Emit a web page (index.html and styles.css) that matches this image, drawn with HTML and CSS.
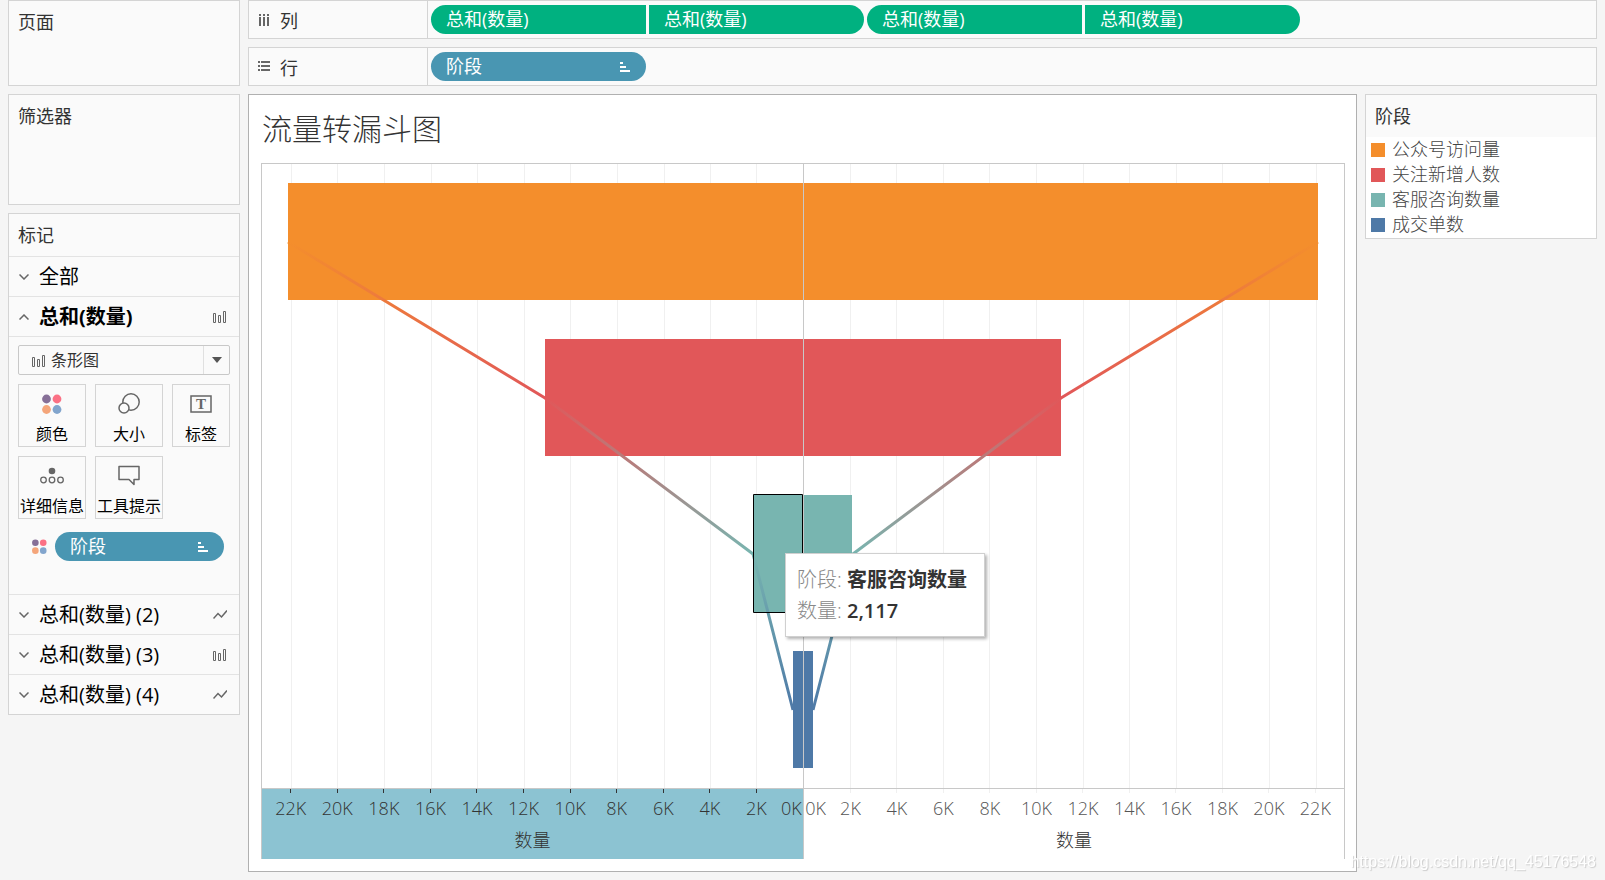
FILE: index.html
```
<!DOCTYPE html>
<html lang="zh-CN">
<head>
    <meta charset="UTF-8">
    <meta name="viewport" content="width=device-width, initial-scale=1.0">
    <title>流量转漏斗图</title>
    <link rel="stylesheet" href="styles.css">
</head>
<body>

    <!-- shared icons -->
    <svg class="sprite" aria-hidden="true">
        <symbol id="icon-down" viewBox="0 0 10 6"><path d="M.5 .5 5 5 9.5 .5" fill="none" stroke="#666" stroke-width="1.5"/></symbol>
        <symbol id="icon-up" viewBox="0 0 10 6"><path d="M.5 5.5 5 1 9.5 5.5" fill="none" stroke="#666" stroke-width="1.5"/></symbol>
        <symbol id="icon-bars" viewBox="0 0 14 12"><path d="M.5 2.5h2v9h-2zM5.5 4.5h2v7h-2zM10.5 .5h2v11h-2z" fill="none" stroke="#666"/></symbol>
        <symbol id="icon-line" viewBox="0 0 14 12"><path d="M.5 9.5 5 4.5 8.5 8 14 1.5" fill="none" stroke="#666" stroke-width="1.5"/></symbol>
        <symbol id="icon-sort" viewBox="0 0 10 10"><path d="M0 0h3v2H0zM0 4h6v2H0zM0 8h10v2H0z" fill="#fff"/></symbol>
        <symbol id="icon-color" viewBox="0 0 20 20">
            <circle cx="4.5" cy="5" r="4.4" fill="#866f97"/>
            <circle cx="15" cy="5" r="4.4" fill="#fb7185"/>
            <circle cx="4.5" cy="15.5" r="4.4" fill="#f4a57a"/>
            <circle cx="15" cy="15.5" r="4.4" fill="#82a5cd"/>
        </symbol>
    </svg>

    <div class="workspace">
        <aside class="sidebar">
            <section class="card pages"><h2>页面</h2></section>
            <section class="card filters"><h2>筛选器</h2></section>

            <section class="card marks">
                <h2>标记</h2>
                <button class="mark-row"><svg class="chevron"><use href="#icon-down"/></svg>全部</button>
                <button class="mark-row open"><svg class="chevron"><use href="#icon-up"/></svg>总和(数量)<svg class="mark-type"><use href="#icon-bars"/></svg></button>

                <div class="mark-detail">
                    <div class="type-select">
                        <svg class="type-icon"><use href="#icon-bars"/></svg>
                        <select aria-label="标记类型">
                            <option>条形图</option>
                        </select>
                        <span class="type-arrow"></span>
                    </div>

                    <div class="mark-buttons">
                        <button>
                            <svg viewBox="0 0 22 22"><use href="#icon-color" x="1" y="1" width="20" height="20"/></svg>
                            颜色
                        </button>
                        <button>
                            <svg viewBox="0 0 22 22" fill="#fafafa" stroke="#666" stroke-width="1.5">
                                <circle cx="13" cy="9" r="8.2"/>
                                <circle cx="6" cy="15" r="5"/>
                            </svg>
                            大小
                        </button>
                        <button>
                            <svg viewBox="0 0 22 22">
                                <rect x="1" y="3" width="20" height="16" fill="none" stroke="#666" stroke-width="1.5"/>
                                <text x="11" y="16" class="t-glyph">T</text>
                            </svg>
                            标签
                        </button>
                        <button>
                            <svg class="wide" viewBox="0 0 24 22" fill="none" stroke="#666" stroke-width="1.3">
                                <circle cx="12" cy="6" r="3.3" fill="#666" stroke="none"/>
                                <circle cx="3.5" cy="15" r="2.8"/>
                                <circle cx="12" cy="15" r="2.8"/>
                                <circle cx="20.5" cy="15" r="2.8"/>
                            </svg>
                            详细信息
                        </button>
                        <button>
                            <svg viewBox="0 0 22 22" fill="none" stroke="#666" stroke-width="1.5" stroke-linejoin="round">
                                <path d="M1 1.5h20v13h-5v5l-5-5H1z"/>
                            </svg>
                            工具提示
                        </button>
                    </div>

                    <div class="mark-pill">
                        <svg><use href="#icon-color"/></svg>
                        <button class="pill dimension">阶段<svg><use href="#icon-sort"/></svg></button>
                    </div>
                </div>

                <button class="mark-row"><svg class="chevron"><use href="#icon-down"/></svg>总和(数量) (2)<svg class="mark-type"><use href="#icon-line"/></svg></button>
                <button class="mark-row"><svg class="chevron"><use href="#icon-down"/></svg>总和(数量) (3)<svg class="mark-type"><use href="#icon-bars"/></svg></button>
                <button class="mark-row"><svg class="chevron"><use href="#icon-down"/></svg>总和(数量) (4)<svg class="mark-type"><use href="#icon-line"/></svg></button>
            </section>
        </aside>

        <main class="main">
            <div class="card shelf">
                <div class="shelf-label">
                    <svg viewBox="0 0 12 12" fill="#666"><path d="M1 0h2v2H1zM5 0h2v2H5zM9 0h2v2H9zM1 3h2v9H1zM5 3h2v9H5zM9 3h2v9H9z"/></svg>
                    列
                </div>
                <div class="pills">
                    <button class="pill measure first">总和(数量)</button>
                    <button class="pill measure last">总和(数量)</button>
                    <button class="pill measure first">总和(数量)</button>
                    <button class="pill measure last">总和(数量)</button>
                </div>
            </div>
            <div class="card shelf">
                <div class="shelf-label">
                    <svg viewBox="0 0 12 12" fill="#666"><path d="M0 0h2v2H0zM3 0h9v2H3zM0 4h2v2H0zM3 4h9v2H3zM0 8h2v2H0zM3 8h9v2H3z"/></svg>
                    行
                </div>
                <div class="pills">
                    <button class="pill dimension">阶段<svg><use href="#icon-sort"/></svg></button>
                </div>
            </div>

            <div class="content">
                <section class="view">
                    <h1>流量转漏斗图</h1>
                    <div class="chart">
                        <div class="plot">
                            <svg viewBox="0 0 1082 624" preserveAspectRatio="none" role="img" aria-label="流量转漏斗图">
                                <defs>
                                    <linearGradient id="stage" gradientUnits="userSpaceOnUse" x1="0" y1="78" x2="0" y2="546">
                                        <stop offset="0" stop-color="#f48e2c"/>
                                        <stop offset="33.3%" stop-color="#e15759"/>
                                        <stop offset="66.7%" stop-color="#78b5b0"/>
                                        <stop offset="100%" stop-color="#4e79a7"/>
                                    </linearGradient>
                                </defs>
                                <path class="grid" d="M29.5 0v624M75.5 0v624M122.5 0v624M169.5 0v624M215.5 0v624M262.5 0v624M308.5 0v624M355.5 0v624M402.5 0v624M448.5 0v624M494.5 0v624M588.5 0v624M634.5 0v624M681.5 0v624M727.5 0v624M774.5 0v624M821.5 0v624M867.5 0v624M914.5 0v624M960.5 0v624M1007.5 0v624M1054.5 0v624"/>
                                <g shape-rendering="crispEdges">
                                    <rect x="26" y="19" width="1030" height="117" fill="#f48e2c"/>
                                    <rect x="283" y="175" width="516" height="117" fill="#e15759"/>
                                    <rect x="492" y="331" width="98" height="117" fill="#78b5b0"/>
                                    <rect x="531" y="487" width="20" height="117" fill="#4e79a7"/>
                                </g>
                                <path class="trend" d="M26 78 283 234 491 390 531 546"/>
                                <path class="trend" d="M1056 78 799 234 591 390 551 546"/>
                                <rect class="selected" x="491.5" y="330.5" width="49" height="118"/>
                                <path class="zero" d="M541.5 0v624"/>
                            </svg>
                            <div class="tooltip" role="tooltip">
                                <div>阶段: <b>客服咨询数量</b></div>
                                <div>数量: <b>2,117</b></div>
                            </div>
                        </div>
                        <div class="axes">
                            <div class="axis left">
                                <div class="ticks">
                                    <span>22K</span><span>20K</span><span>18K</span><span>16K</span><span>14K</span><span>12K</span><span>10K</span><span>8K</span><span>6K</span><span>4K</span><span>2K</span><span class="origin">0K</span>
                                </div>
                                <div class="axis-title">数量</div>
                            </div>
                            <div class="axis right">
                                <div class="ticks">
                                    <span class="origin">0K</span><span>2K</span><span>4K</span><span>6K</span><span>8K</span><span>10K</span><span>12K</span><span>14K</span><span>16K</span><span>18K</span><span>20K</span><span>22K</span>
                                </div>
                                <div class="axis-title">数量</div>
                            </div>
                        </div>
                    </div>
                </section>

                <aside class="card legend">
                    <h2>阶段</h2>
                    <ul>
                        <li><i class="orange"></i>公众号访问量</li>
                        <li><i class="red"></i>关注新增人数</li>
                        <li><i class="teal"></i>客服咨询数量</li>
                        <li><i class="blue"></i>成交单数</li>
                    </ul>
                </aside>
            </div>
        </main>
    </div>

    <div class="watermark">https://blog.csdn.net/qq_45176548</div>

</body>
</html>
```
FILE: styles.css
```
* {
    box-sizing: border-box;
}
body {
    margin: 0;
    background: #f5f5f5;
    color: #333;
    font-family: "Open Sans", "Noto Sans CJK SC", sans-serif;
    font-size: 18px;
}
button, select {
    margin: 0;
    padding: 0;
    border: none;
    background: none;
    color: inherit;
    font: inherit;
    cursor: pointer;
}
svg {
    display: block;
    flex: none;
}
.sprite {
    position: absolute;
    width: 0;
    height: 0;
}
.workspace {
    display: grid;
    grid-template-columns: 232px minmax(0, 1fr);
    gap: 8px;
    min-height: 100vh;
    padding: 0 8px 8px;
}
.card {
    background: #fafafa;
    border: 1px solid #d4d4d4;
}
h2 {
    margin: 0;
    padding: 0 9px;
    font-size: 18px;
    font-weight: 400;
    line-height: 42px;
}

/* left side */
.sidebar {
    display: flex;
    flex-direction: column;
    gap: 8px;
}
.pages {
    height: 86px;
}
.filters {
    height: 111px;
}
.mark-row {
    display: flex;
    align-items: center;
    width: 100%;
    height: 40px;
    padding: 0 12px 0 10px;
    border-top: 1px solid #e3e3e3;
    color: #000;
    font-size: 20px;
    line-height: 24px;
    text-align: left;
}
.mark-row.open {
    font-weight: 700;
}
.chevron {
    width: 10px;
    height: 6px;
    margin-right: 10px;
}
.mark-type {
    width: 14px;
    height: 12px;
    margin-left: auto;
}
.mark-detail {
    padding: 8px 9px 33px;
    border-top: 1px solid #e3e3e3;
}
.type-select {
    position: relative;
    height: 30px;
}
.type-select select {
    appearance: none;
    width: 100%;
    height: 30px;
    padding-left: 32px;
    border: 1px solid #c8c8c8;
    border-radius: 2px;
    font-size: 16px;
}
.type-icon {
    position: absolute;
    left: 14px;
    top: 10px;
    width: 14px;
    height: 12px;
}
.type-arrow {
    position: absolute;
    top: 1px;
    right: 1px;
    width: 26px;
    height: 28px;
    border-left: 1px solid #e0e0e0;
    pointer-events: none;
}
.type-arrow::after {
    content: "";
    position: absolute;
    left: 8px;
    top: 11px;
    border: 5px solid transparent;
    border-top: 6px solid #555;
    border-bottom: 0;
}
.mark-buttons {
    display: grid;
    grid-template-columns: 68px 68px 58px;
    gap: 9px;
    margin-top: 9px;
}
.mark-buttons button {
    display: flex;
    flex-direction: column;
    align-items: center;
    gap: 7px;
    height: 63px;
    padding-top: 8px;
    border: 1px solid #d4d4d4;
    color: #000;
    font-size: 16px;
    line-height: 24px;
    white-space: nowrap;
}
.mark-buttons svg {
    width: 22px;
    height: 22px;
}
.mark-buttons .wide {
    width: 24px;
}
.t-glyph {
    fill: #666;
    font-family: "Liberation Serif", serif;
    font-size: 15px;
    font-weight: 700;
    text-anchor: middle;
}
.mark-pill {
    display: flex;
    align-items: center;
    gap: 8px;
    margin-top: 13px;
    padding: 0 6px 0 14px;
}
.mark-pill > svg {
    width: 15px;
    height: 15px;
}
.mark-pill .pill {
    flex: 1;
}

/* shelves */
.main {
    display: flex;
    flex-direction: column;
    gap: 8px;
}
.shelf {
    display: flex;
    height: 39px;
}
.shelf-label {
    display: flex;
    align-items: center;
    gap: 10px;
    width: 179px;
    padding-left: 9px;
    border-right: 1px solid #d4d4d4;
}
.shelf-label svg {
    width: 12px;
    height: 12px;
}
.pills {
    display: flex;
    align-items: center;
    gap: 3px;
    padding-left: 3px;
}
.pill {
    display: flex;
    align-items: center;
    justify-content: space-between;
    width: 215px;
    height: 29px;
    padding: 0 16px 0 15px;
    border-radius: 15px;
    color: #fff;
    line-height: 29px;
}
.pill svg {
    width: 10px;
    height: 10px;
}
.measure {
    background: #00b180;
}
.dimension {
    background: #4996b2;
}
.first {
    border-radius: 15px 0 0 15px;
}
.last {
    border-radius: 0 15px 15px 0;
}

/* chart */
.content {
    display: grid;
    grid-template-columns: minmax(0, 1fr) 232px;
    align-items: start;
    gap: 8px;
    flex: 1;
}
.view {
    display: flex;
    flex-direction: column;
    align-self: stretch;
    padding: 0 11px 12px 12px;
    background: #fff;
    border: 1px solid #b0b0b0;
}
h1 {
    margin: 0;
    padding-left: 1px;
    font-size: 30px;
    font-weight: 300;
    line-height: 68px;
}
.chart {
    display: flex;
    flex-direction: column;
    flex: 1;
    border: 1px solid #c8c8c8;
    border-bottom: none;
}
.plot {
    position: relative;
    flex: 1;
    min-height: 300px;
}
.plot svg {
    position: absolute;
    width: 100%;
    height: 100%;
}
.plot path, .selected {
    fill: none;
    vector-effect: non-scaling-stroke;
}
.grid {
    stroke: #f0f0f0;
}
.zero {
    stroke: #c8c8c8;
}
.trend {
    stroke: url(#stage);
    stroke-width: 3;
}
.selected {
    stroke: #000;
}
.tooltip {
    position: absolute;
    left: calc(50% - 18px);
    top: calc(62% + 2px);
    padding: 10px 17px 10px 11px;
    background: #fff;
    border: 1px solid #d0d0d0;
    box-shadow: 2px 2px 3px rgba(0, 0, 0, 0.3);
    color: #888;
    font-size: 20px;
    font-weight: 300;
    line-height: 31px;
    white-space: nowrap;
}
.tooltip b {
    color: #333;
    font-weight: 600;
}
.axes {
    display: grid;
    grid-template-columns: 1fr 1fr;
    border-top: 1px solid #c8c8c8;
}
.axis {
    padding-bottom: 7px;
    line-height: 24px;
    text-align: center;
}
.axis.left {
    background: #8cc3d2;
}
.axis.right {
    border-left: 1px solid #c8c8c8;
}
.ticks {
    display: grid;
    color: #555;
    font-weight: 300;
}
.left .ticks {
    grid-template-columns: repeat(11, 2fr) 1fr;
    padding-left: 1%;
    color: #333;
}
.right .ticks {
    grid-template-columns: 1fr repeat(11, 2fr);
    padding-right: 1%;
}
.ticks span {
    display: flex;
    flex-direction: column;
    align-items: center;
    min-width: 0;
}
.ticks span::before {
    content: "";
    width: 1px;
    height: 4px;
    margin-bottom: 3px;
    background: #333;
}
.right .ticks span::before {
    background: #f0f0f0;
}
.ticks .origin::before {
    visibility: hidden;
}
.axis-title {
    margin-top: 8px;
    font-weight: 300;
}

/* legend */
.legend ul {
    margin: 0;
    padding: 0 0 1px 5px;
    background: #fff;
    list-style: none;
}
.legend li {
    display: flex;
    align-items: center;
    gap: 7px;
    height: 25px;
    color: #444;
    font-weight: 300;
    line-height: 25px;
}
.legend i {
    width: 14px;
    height: 14px;
}
.orange { background: #f48e2c; }
.red { background: #e15759; }
.teal { background: #78b5b0; }
.blue { background: #4e79a7; }

.watermark {
    position: fixed;
    right: 9px;
    bottom: 8px;
    color: #fff;
    font-family: "Liberation Sans", sans-serif;
    font-size: 16px;
    line-height: 20px;
    text-shadow: 1px 1px 1px #ccc;
}
```
